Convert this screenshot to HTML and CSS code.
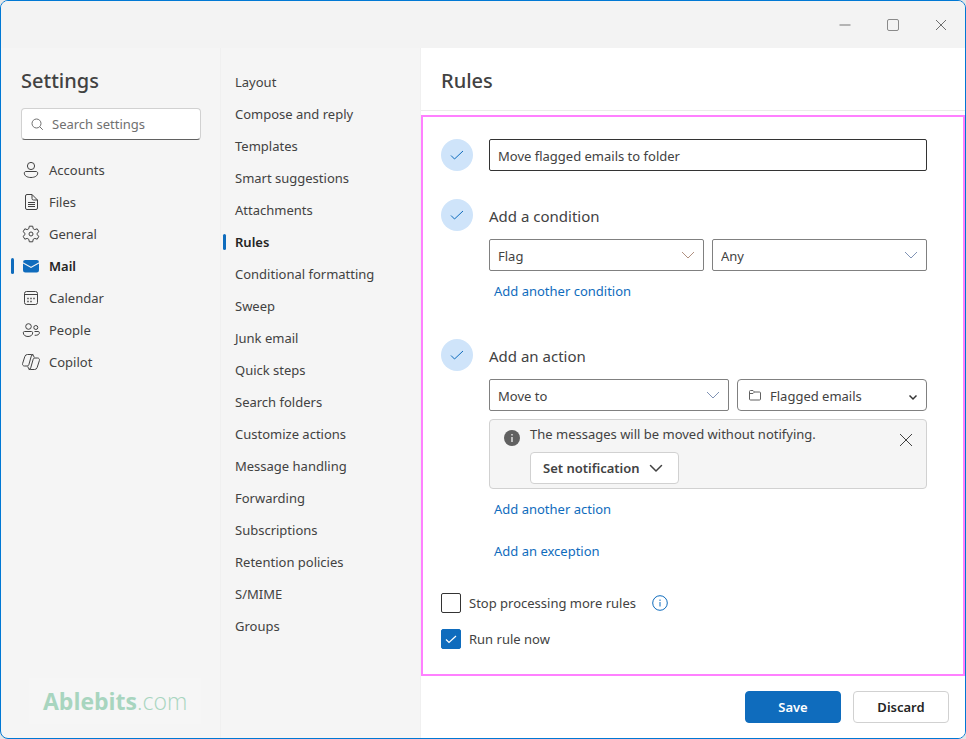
FILE: index.html
```html
<!DOCTYPE html>
<html lang="en">
<head>
  <meta charset="UTF-8" />
  <meta name="viewport" content="width=device-width, initial-scale=1.0"/>
  <title>Settings - Rules</title>
  <link rel="stylesheet" href="styles.css">
</head>
<body>
  <div class="window">
    <header class="titlebar">
      <button class="win-btn" type="button" aria-label="Minimize">
        <svg width="14" height="14" viewBox="0 0 14 14"><path d="M1.500 7h11" stroke="#b4b4b4" stroke-width="2"/></svg>
      </button>
      <button class="win-btn" type="button" aria-label="Maximize">
        <svg width="14" height="14" viewBox="0 0 14 14"><rect x="1.500" y="1.500" width="11" height="11" rx="1.500" fill="none" stroke="#8a8a8a"/></svg>
      </button>
      <button class="win-btn" type="button" aria-label="Close">
        <svg width="14" height="14" viewBox="0 0 14 14"><path d="M2 2l10 10M12 2L2 12" stroke="#6e6e6e"/></svg>
      </button>
    </header>

    <div class="layout">
      <aside class="sidebar">
        <h1 class="heading">Settings</h1>
        <label class="search">
          <svg width="14" height="14" viewBox="0 0 14 14" fill="none" stroke="#707070"><circle cx="6.500" cy="6.500" r="4.500"/><path d="M9.800 9.800l3 3"/></svg>
          <input type="text" placeholder="Search settings" aria-label="Search settings">
        </label>

        <nav class="categories">
          <a class="category" href="#accounts">
            <svg class="icon" viewBox="0 0 20 20"><circle cx="10" cy="6" r="3.600"/><path d="M5 11.500h10c1 0 1.700.7 1.700 1.600 0 2.800-3 4.400-6.700 4.400s-6.700-1.600-6.700-4.400c0-.9.7-1.600 1.700-1.600z"/></svg>
            Accounts
          </a>
          <a class="category" href="#files">
            <svg class="icon" viewBox="0 0 20 20"><path d="M11 2.500H6A1.500 1.500 0 0 0 4.500 4v12A1.500 1.500 0 0 0 6 17.500h9a1.500 1.500 0 0 0 1.500-1.500V8zM11 2.500V6.500A1.500 1.500 0 0 0 12.500 8h4M7 10.500h7M7 12.500h7M7 14.500h7"/></svg>
            Files
          </a>
          <a class="category" href="#general">
            <svg class="icon" viewBox="0 0 20 20"><circle cx="10" cy="10" r="2"/><path d="M8.300 2.200h3.400l.5 2.500 1.600.9 2.400-.8 1.700 2.900-1.900 1.700v1.200l1.900 1.700-1.700 2.900-2.400-.8-1.600.9-.5 2.500H8.300l-.5-2.500-1.600-.9-2.400.8-1.700-2.900L4 10.600V9.400L2.100 7.700l1.700-2.900 2.400.8 1.600-.9z"/></svg>
            General
          </a>
          <a class="category active" href="#mail">
            <svg class="icon" viewBox="0 0 20 20"><g fill="#0f6cbd" stroke="none"><path d="M2 6.300A2.300 2.300 0 0 1 4.300 4h11.400A2.300 2.300 0 0 1 18 6.300L10 10.800z"/><path d="M2 7.600l8 4.400 8-4.400v6.600a2.300 2.300 0 0 1-2.300 2.300H4.300A2.300 2.300 0 0 1 2 14.200z"/></g></svg>
            Mail
          </a>
          <a class="category" href="#calendar">
            <svg class="icon" viewBox="0 0 20 20"><rect x="3.500" y="3.500" width="13" height="13" rx="2"/><path d="M3.500 6.500h13"/><path d="M6.300 10.500h1.400m1.600 0h1.400m1.600 0h1.400M6.300 13.500h1.400m1.600 0h1.400" stroke-width="1.500"/></svg>
            Calendar
          </a>
          <a class="category" href="#people">
            <svg class="icon" viewBox="0 0 20 20"><circle cx="7.500" cy="6.500" r="2.800"/><circle cx="14.800" cy="7.500" r="2"/><path d="M3.500 11.500h7c.7 0 1.200.5 1.200 1.200 0 2.300-1.900 3.800-4.700 3.800s-4.700-1.500-4.700-3.800c0-.7.5-1.200 1.200-1.200zM13.500 11.500h3.700c.7 0 1.200.5 1.200 1.100 0 1.800-1.500 2.900-4.700 2.700"/></svg>
            People
          </a>
          <a class="category" href="#copilot">
            <svg class="icon" viewBox="0 0 20 20"><path d="M13.200 5.500l-.6-1.700A1.900 1.900 0 0 0 10.800 2.500H6.500A2.800 2.800 0 0 0 3.800 4.600L1.600 11.500c-.4 1.300.5 2.500 1.800 2.500h2.800c.8 0 1.400-.5 1.600-1.200l2.500-8.700a2.200 2.200 0 0 1 2-1.600M6.800 14.500l.6 1.700a1.900 1.900 0 0 0 1.800 1.300h4.300a2.800 2.800 0 0 0 2.700-2.100l2.200-6.900c.4-1.300-.5-2.500-1.800-2.500h-2.800c-.8 0-1.400.5-1.600 1.200l-2.500 8.700a2.200 2.200 0 0 1-2 1.600"/></svg>
            Copilot
          </a>
        </nav>

        <div class="brand"><b>Ablebits</b>.com</div>
      </aside>

      <nav class="sections">
        <a class="section" href="#layout">Layout</a>
        <a class="section" href="#compose">Compose and reply</a>
        <a class="section" href="#templates">Templates</a>
        <a class="section" href="#suggestions">Smart suggestions</a>
        <a class="section" href="#attachments">Attachments</a>
        <a class="section active" href="#rules">Rules</a>
        <a class="section" href="#formatting">Conditional formatting</a>
        <a class="section" href="#sweep">Sweep</a>
        <a class="section" href="#junk">Junk email</a>
        <a class="section" href="#quick-steps">Quick steps</a>
        <a class="section" href="#search-folders">Search folders</a>
        <a class="section" href="#actions">Customize actions</a>
        <a class="section" href="#message-handling">Message handling</a>
        <a class="section" href="#forwarding">Forwarding</a>
        <a class="section" href="#subscriptions">Subscriptions</a>
        <a class="section" href="#retention">Retention policies</a>
        <a class="section" href="#smime">S/MIME</a>
        <a class="section" href="#groups">Groups</a>
      </nav>

      <main class="content">
        <div class="content-header">
          <h2 class="heading">Rules</h2>
        </div>

        <form class="rule">
          <div class="step">
            <span class="badge"><svg width="16" height="16" viewBox="0 0 16 16"><path d="M2 8.500l3.500 3.500L14 4"/></svg></span>
            <input class="name" type="text" value="Move flagged emails to folder" aria-label="Rule name">
          </div>

          <div class="step">
            <span class="badge"><svg width="16" height="16" viewBox="0 0 16 16"><path d="M2 8.500l3.500 3.500L14 4"/></svg></span>
            <div class="step-body">
              <h3 class="step-title">Add a condition</h3>
              <div class="fields halves">
                <div class="select">
                  <select aria-label="Condition"><option>Flag</option></select>
                  <svg class="chevron warm" width="12" height="12" viewBox="0 0 12 12"><path d="M0 3l6 6 6-6"/></svg>
                </div>
                <div class="select">
                  <select aria-label="Flag type"><option>Any</option></select>
                  <svg class="chevron" width="12" height="12" viewBox="0 0 12 12"><path d="M0 3l6 6 6-6"/></svg>
                </div>
              </div>
              <a class="link" href="#add-condition">Add another condition</a>
            </div>
          </div>

          <div class="step">
            <span class="badge"><svg width="16" height="16" viewBox="0 0 16 16"><path d="M2 8.500l3.500 3.500L14 4"/></svg></span>
            <div class="step-body">
              <h3 class="step-title">Add an action</h3>
              <div class="fields action">
                <div class="select">
                  <select aria-label="Action"><option>Move to</option></select>
                  <svg class="chevron" width="12" height="12" viewBox="0 0 12 12"><path d="M0 3l6 6 6-6"/></svg>
                </div>
                <div class="select folder">
                  <svg class="folder-icon" width="14" height="14" viewBox="0 0 14 14"><path d="M1.500 3.500a1 1 0 0 1 1-1h2.500l1.500 1.500h5a1 1 0 0 1 1 1v6a1 1 0 0 1-1 1h-9a1 1 0 0 1-1-1zM1.500 5.500H5L6.500 4"/></svg>
                  <select aria-label="Folder"><option>Flagged emails</option></select>
                  <svg class="chevron" width="8" height="8" viewBox="0 0 8 8"><path d="M.500 2.500L4 6l3.500-3.500"/></svg>
                </div>
              </div>
              <div class="notice">
                <svg class="notice-icon" width="16" height="16" viewBox="0 0 16 16"><circle cx="8" cy="8" r="8" fill="#616161"/><path d="M8 7v5M8 4v1.500" stroke="#fff" stroke-width="1.200"/></svg>
                <div class="notice-body">
                  <p>The messages will be moved without notifying.</p>
                  <button class="btn notify" type="button">
                    Set notification
                    <svg width="14" height="14" viewBox="0 0 14 14"><path d="M1.500 4.500L7 10l5.500-5.500" fill="none" stroke="#424242" stroke-width="1.500" stroke-linecap="round" stroke-linejoin="round"/></svg>
                  </button>
                </div>
                <button class="dismiss" type="button" aria-label="Dismiss">
                  <svg width="14" height="14" viewBox="0 0 14 14"><path d="M1 1l12 12M13 1L1 13" stroke="#424242"/></svg>
                </button>
              </div>
              <a class="link" href="#add-action">Add another action</a>
              <a class="link exception" href="#add-exception">Add an exception</a>
            </div>
          </div>

          <div class="options">
            <div class="option">
              <input type="checkbox" id="stop"><label for="stop">Stop processing more rules</label>
              <svg class="info" width="16" height="16" viewBox="0 0 16 16"><circle cx="8" cy="8" r="7.300" fill="none" stroke="#0f6cbd"/><path d="M8 7v4.500M8 4.500V6" stroke="#0f6cbd"/></svg>
            </div>
            <div class="option">
              <span class="tick">
                <input type="checkbox" id="run" checked>
                <svg width="12" height="12" viewBox="0 0 12 12"><path d="M1 6.500l3 3L11 3" fill="none" stroke="#fff" stroke-width="1.200"/></svg>
              </span>
              <label for="run">Run rule now</label>
            </div>
          </div>
        </form>

        <footer class="actions">
          <button class="btn primary" type="button">Save</button>
          <button class="btn" type="button">Discard</button>
        </footer>
      </main>
    </div>
  </div>
</body>
</html>
```
FILE: styles.css
```css
* {
  box-sizing: border-box;
}

body {
  margin: 0;
  background: #e6e6e6;
  color: #424242;
  font-family: "Noto Sans", "Open Sans", sans-serif;
  font-size: 13px;
  line-height: 20px;
}

h1, h2, h3, p {
  margin: 0;
}

a {
  color: inherit;
  text-decoration: none;
}

button, input, select {
  font: inherit;
  color: inherit;
}

svg {
  display: block;
  flex: none;
}

.window {
  display: flex;
  flex-direction: column;
  min-height: 100vh;
  border: 1px solid #0078d4;
  border-radius: 8px;
  background: #f5f5f5;
  overflow: hidden;
}

.titlebar {
  display: flex;
  justify-content: flex-end;
  height: 47px;
  background: #f3f3f3;
}

.win-btn {
  display: flex;
  align-items: center;
  justify-content: center;
  width: 48px;
  border: 0;
  padding: 0;
  background: none;
}

.layout {
  display: grid;
  grid-template-columns: 219px 201px 1fr;
  flex: 1;
}

.heading {
  font-size: 20px;
  font-weight: 500;
  line-height: 30px;
}

/* left column */
.sidebar {
  display: flex;
  flex-direction: column;
  padding: 18px 19px 14px 20px;
}

.search {
  display: flex;
  align-items: center;
  gap: 8px;
  height: 32px;
  margin: 12px 0 14px;
  padding: 0 8px;
  border: 1px solid #d1d1d1;
  border-bottom-color: #616161;
  border-radius: 4px;
  background: #fff;
}

.search input {
  width: 100%;
  min-width: 0;
  padding: 0;
  border: 0;
  background: none;
}

.search input::placeholder {
  color: #707070;
  opacity: 1;
}

.category,
.section {
  position: relative;
  display: flex;
  align-items: center;
  height: 32px;
}

.category {
  gap: 8px;
}

.active {
  color: #242424;
  font-weight: 600;
}

.active::before {
  content: "";
  position: absolute;
  left: -10px;
  width: 3px;
  height: 16px;
  border-radius: 2px;
  background: #0f6cbd;
}

.icon {
  width: 20px;
  height: 20px;
  fill: none;
  stroke: #424242;
}

.brand {
  margin: auto 0 0 8px;
  padding: 0 14px;
  background: #f6f6f6;
  color: #a8d5bf;
  font-family: "Open Sans", sans-serif;
  font-size: 23px;
  font-weight: 300;
  line-height: 46px;
}

.brand b {
  font-weight: 700;
}

/* mail sections */
.sections {
  padding: 18px 0 20px 14px;
  border-left: 1px solid #f0f0f0;
  border-right: 1px solid #f0f0f0;
}

.sections .active::before {
  left: -12px;
}

/* rule editor */
.content {
  min-width: 0;
  background: #fff;
}

.content-header {
  padding: 18px 20px 14px;
  border-bottom: 1px solid #ebebeb;
}

.rule {
  margin-top: 4px;
  padding: 22px 36px 25px 18px;
  border: 2px solid #ff80ff;
}

.step {
  display: flex;
  gap: 16px;
  margin-bottom: 28px;
}

.step + .step + .step {
  margin: 38px 0 32px;
}

.badge {
  display: flex;
  align-items: center;
  justify-content: center;
  flex: none;
  width: 32px;
  height: 32px;
  border-radius: 50%;
  background: #cfe4fa;
}

.badge path {
  fill: none;
  stroke: #0f6cbd;
}

.name {
  width: 100%;
  height: 32px;
  padding: 2px 8px 0;
  border: 1px solid #333;
  border-radius: 2px;
}

.step-body {
  flex: 1;
  min-width: 0;
}

.step-title {
  padding-top: 2px;
  font-size: 15px;
  font-weight: 400;
  line-height: 30px;
}

.fields {
  display: grid;
  gap: 8px;
  margin: 8px 0;
}

.halves {
  grid-template-columns: 1fr 1fr;
}

.action {
  grid-template-columns: 1fr 190px;
}

.select {
  position: relative;
}

.select select {
  display: block;
  width: 100%;
  height: 32px;
  padding: 2px 30px 0 8px;
  border: 1px solid #808080;
  border-radius: 2px;
  background: #fff;
  appearance: none;
}

.chevron {
  position: absolute;
  top: 10px;
  right: 10px;
  fill: none;
  stroke: #8093b5;
  pointer-events: none;
}

.warm {
  stroke: #b09080;
}

.folder select {
  padding-left: 32px;
  border-radius: 4px;
}

.folder .chevron {
  top: 14px;
  stroke: #333;
  stroke-width: 1.5;
}

.folder-icon {
  position: absolute;
  top: 9px;
  left: 11px;
  fill: none;
  stroke: #616161;
  pointer-events: none;
}

.link {
  display: block;
  width: fit-content;
  margin: 10px 0 0 5px;
  color: #0f6cbd;
}

.exception {
  margin-top: 22px;
}

.notice {
  display: flex;
  gap: 10px;
  padding: 4px 13px 4px 14px;
  border: 1px solid #d1d1d1;
  border-radius: 4px;
  background: #f5f5f5;
}

.notice-icon {
  margin-top: 6px;
}

.notice-body {
  flex: 1;
}

.btn {
  display: flex;
  align-items: center;
  justify-content: center;
  gap: 8px;
  min-width: 96px;
  height: 32px;
  padding: 0 12px;
  border: 1px solid #d1d1d1;
  border-radius: 4px;
  background: #fff;
  color: #242424;
  font-weight: 600;
}

.notify {
  gap: 9px;
  margin-top: 8px;
  padding-right: 15px;
  color: #424242;
}

.dismiss {
  align-self: flex-start;
  margin-top: 9px;
  padding: 0;
  border: 0;
  background: none;
}

.options {
  display: grid;
  gap: 16px;
}

.option {
  display: flex;
  align-items: center;
  gap: 8px;
}

.option input {
  display: block;
  width: 20px;
  height: 20px;
  margin: 0;
  border: 1px solid #333;
  border-radius: 2px;
  background: #fff;
  appearance: none;
}

.option input:checked {
  border-color: #0f6cbd;
  background: #0f6cbd;
}

.tick {
  display: grid;
  place-items: center;
}

.tick > * {
  grid-area: 1 / 1;
}

.tick svg {
  pointer-events: none;
}

.info {
  margin-left: 8px;
}

.actions {
  display: flex;
  justify-content: flex-end;
  gap: 12px;
  padding: 15px 16px;
}

.primary {
  border-color: #0f6cbd;
  background: #0f6cbd;
  color: #fff;
}
```
